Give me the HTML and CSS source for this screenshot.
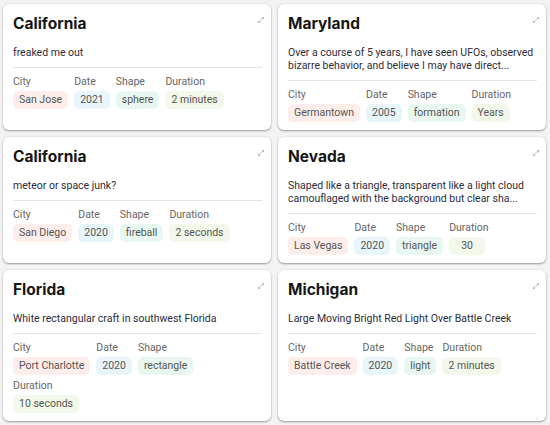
FILE: index.html
```html
<!DOCTYPE html>
<html>
<head>
<meta charset="utf-8">
<link rel="stylesheet" href="styles.css">
</head>
<body>
<div class="grid">
  <div class="card">
    <svg class="expand" viewBox="0 0 24 24"><path d="M21 11V3h-8l3.29 3.29-10 10L3 13v8h8l-3.29-3.29 10-10z"/></svg>
    <h2 class="title">California</h2>
    <p class="desc">freaked me out</p>
    <div class="divider"></div>
    <div class="fields">
      <div class="field"><span class="label">City</span><span class="chip city">San Jose</span></div>
      <div class="field"><span class="label">Date</span><span class="chip date">2021</span></div>
      <div class="field"><span class="label">Shape</span><span class="chip shape">sphere</span></div>
      <div class="field"><span class="label">Duration</span><span class="chip dur">2 minutes</span></div>
    </div>
  </div>
  <div class="card">
    <svg class="expand" viewBox="0 0 24 24"><path d="M21 11V3h-8l3.29 3.29-10 10L3 13v8h8l-3.29-3.29 10-10z"/></svg>
    <h2 class="title">Maryland</h2>
    <p class="desc">Over a course of 5 years, I have seen UFOs, observed bizarre behavior, and believe I may have direct...</p>
    <div class="divider"></div>
    <div class="fields">
      <div class="field"><span class="label">City</span><span class="chip city">Germantown</span></div>
      <div class="field"><span class="label">Date</span><span class="chip date">2005</span></div>
      <div class="field"><span class="label">Shape</span><span class="chip shape">formation</span></div>
      <div class="field"><span class="label">Duration</span><span class="chip dur">Years</span></div>
    </div>
  </div>
  <div class="card">
    <svg class="expand" viewBox="0 0 24 24"><path d="M21 11V3h-8l3.29 3.29-10 10L3 13v8h8l-3.29-3.29 10-10z"/></svg>
    <h2 class="title">California</h2>
    <p class="desc">meteor or space junk?</p>
    <div class="divider"></div>
    <div class="fields">
      <div class="field"><span class="label">City</span><span class="chip city">San Diego</span></div>
      <div class="field"><span class="label">Date</span><span class="chip date">2020</span></div>
      <div class="field"><span class="label">Shape</span><span class="chip shape">fireball</span></div>
      <div class="field"><span class="label">Duration</span><span class="chip dur">2 seconds</span></div>
    </div>
  </div>
  <div class="card">
    <svg class="expand" viewBox="0 0 24 24"><path d="M21 11V3h-8l3.29 3.29-10 10L3 13v8h8l-3.29-3.29 10-10z"/></svg>
    <h2 class="title">Nevada</h2>
    <p class="desc">Shaped like a triangle, transparent like a light cloud camouflaged with the background but clear sha...</p>
    <div class="divider"></div>
    <div class="fields">
      <div class="field"><span class="label">City</span><span class="chip city">Las Vegas</span></div>
      <div class="field"><span class="label">Date</span><span class="chip date">2020</span></div>
      <div class="field"><span class="label">Shape</span><span class="chip shape">triangle</span></div>
      <div class="field"><span class="label">Duration</span><span class="chip dur wide">30</span></div>
    </div>
  </div>
  <div class="card">
    <svg class="expand" viewBox="0 0 24 24"><path d="M21 11V3h-8l3.29 3.29-10 10L3 13v8h8l-3.29-3.29 10-10z"/></svg>
    <h2 class="title">Florida</h2>
    <p class="desc">White rectangular craft in southwest Florida</p>
    <div class="divider"></div>
    <div class="fields">
      <div class="field"><span class="label">City</span><span class="chip city">Port Charlotte</span></div>
      <div class="field"><span class="label">Date</span><span class="chip date">2020</span></div>
      <div class="field"><span class="label">Shape</span><span class="chip shape">rectangle</span></div>
      <div class="field"><span class="label">Duration</span><span class="chip dur">10 seconds</span></div>
    </div>
  </div>
  <div class="card">
    <svg class="expand" viewBox="0 0 24 24"><path d="M21 11V3h-8l3.29 3.29-10 10L3 13v8h8l-3.29-3.29 10-10z"/></svg>
    <h2 class="title">Michigan</h2>
    <p class="desc">Large Moving Bright Red Light Over Battle Creek</p>
    <div class="divider"></div>
    <div class="fields">
      <div class="field"><span class="label">City</span><span class="chip city">Battle Creek</span></div>
      <div class="field"><span class="label">Date</span><span class="chip date">2020</span></div>
      <div class="field"><span class="label">Shape</span><span class="chip shape">light</span></div>
      <div class="field"><span class="label">Duration</span><span class="chip dur">2 minutes</span></div>
    </div>
  </div>
</div>
</body>
</html>
```

FILE: styles.css
```css
* { box-sizing: border-box; }
html, body {
  margin: 0;
  background: #f3f3f3;
  font-family: Roboto, "Noto Sans", sans-serif;
  color: #2a2a35;
}
.grid {
  display: grid;
  grid-template-columns: 1fr 1fr;
  gap: 7px;
  padding: 4px 4px 4px 3px;
}
.card {
  position: relative;
  background: #fff;
  border-radius: 6px;
  box-shadow: 0 1px 2px rgba(0,0,0,0.35), 0 0 3px rgba(0,0,0,0.08);
  padding: 9px 9px 8px 10px;
}
.expand {
  position: absolute;
  top: 12px;
  right: 6px;
  width: 8px;
  height: 8px;
  fill: #bbbbbb;
}
.title {
  margin: 0;
  font-family: Inter, Roboto, sans-serif;
  font-size: 15.5px;
  line-height: 21px;
  font-weight: 700;
  color: #161616;
}
.desc {
  margin: 12px 0 0 0;
  font-size: 10.5px;
  line-height: 13px;
  color: #2c2c3a;
  display: -webkit-box;
  -webkit-line-clamp: 2;
  -webkit-box-orient: vertical;
  overflow: hidden;
}
.divider {
  height: 1px;
  background: #e4e4e4;
  margin-top: 8px;
}
.fields {
  display: flex;
  flex-wrap: wrap;
  column-gap: 6px;
  row-gap: 5px;
  margin-top: 8px;
}
.field {
  display: flex;
  flex-direction: column;
  align-items: flex-start;
  gap: 3px;
}
.label {
  font-size: 10.5px;
  line-height: 12px;
  color: #666;
}
.chip {
  display: inline-block;
  height: 18px;
  line-height: 18px;
  padding: 0 6px;
  border-radius: 5px;
  font-size: 10.5px;
  color: #555;
}
.chip.wide { padding: 0 12px; }
.city { background: #fdeeeb; }
.date { background: #e8f6fc; }
.shape { background: #e8f8f1; }
.dur { background: #f2f8ea; }
```
